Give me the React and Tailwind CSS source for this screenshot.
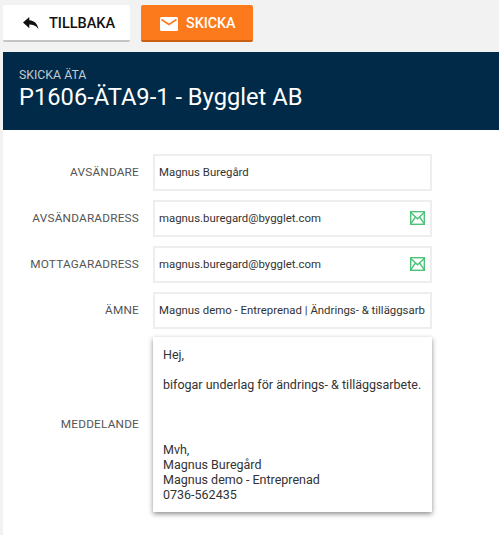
const Field = ({ label, value, icon }) => (
  <div className="flex items-center h-[37px] mb-[9px]">
    <div className="w-[136px] text-right text-[11.8px] tracking-[0.2px] text-[#555]">{label}</div>
    <div className="ml-[14px] w-[279px] h-full flex items-center justify-between bg-white border-2 border-[#eeeeee] px-[4px] text-[11.4px] text-[#333] whitespace-nowrap">
      <span>{value}</span>
      {icon && <MailOutline />}
    </div>
  </div>
);

// outlined green envelope
const MailOutline = () => (
  <svg width="15" height="14" viewBox="0 0 15 14" fill="none" stroke="#4cc27a" strokeWidth="1.4" className="mr-[1px] -mt-[2px]">
    <rect x="0.7" y="0.7" width="13.6" height="12.6" />
    <path d="M0.7 1.5 L7.5 7.8 L14.3 1.5 M0.7 12.8 L5.4 6 M14.3 12.8 L9.6 6" />
  </svg>
);

const BackArrow = () => (
  <svg width="16" height="13" viewBox="0 0 16 13" fill="#111">
    <path d="M6.3 0 L0 5.6 L6.3 11.2 V7.6 C10 7.6 13 8.6 15.4 12 C14.6 7.4 12 3.6 6.3 3.2 Z" />
  </svg>
);

const SendMail = () => (
  <svg width="18" height="14" viewBox="0 0 18 14">
    <rect width="18" height="14" rx="1.5" fill="#fff" />
    <path d="M1.5 2.5 L9 7.5 L16.5 2.5" fill="none" stroke="#fd7a1c" strokeWidth="1.6" />
  </svg>
);

export default function App() {
  return (
    <div className="w-[499px] h-[535px] overflow-hidden bg-[#f2f2f2] font-['Roboto',sans-serif]">
      {/* Buttons */}
      <div className="flex gap-[11px] pl-[3px] pt-[5px] h-[52px]">
        <button className="w-[127px] h-[37px] flex items-center pl-[20px] pt-[2px] gap-[10px] bg-white rounded-[2px] border-b-2 border-[#c4c4c4] text-[14.5px] font-medium text-[#111]">
          <BackArrow />
          TILLBAKA
        </button>
        <button className="w-[112px] h-[37px] flex items-center pl-[19px] pt-[2px] gap-[8px] bg-[#fd7a1c] rounded-[2px] border-b-2 border-[#c95f10] text-[14.3px] font-medium text-white">
          <SendMail />
          SKICKA
        </button>
      </div>

      {/* Header */}
      <div className="ml-[3px] h-[78px] bg-[#002a47] text-white pl-[16px] pt-[16px]">
        <div className="text-[12.3px] leading-[14px] text-[#c3ccd3]">SKICKA ÄTA</div>
        <div className="text-[23.7px] leading-[30px]">P1606-ÄTA9-1 - Bygglet AB</div>
      </div>

      {/* Form */}
      <div className="ml-[3px] h-[405px] bg-white pt-[24px]">
        <Field label="AVSÄNDARE" value="Magnus Buregård" />
        <Field label="AVSÄNDARADRESS" value="magnus.buregard@bygglet.com" icon />
        <Field label="MOTTAGARADRESS" value="magnus.buregard@bygglet.com" icon />
        <Field label="ÄMNE" value="Magnus demo - Entreprenad | Ändrings- & tilläggsarb" />
        <div className="flex items-center h-[175px] -mt-[1px]">
          <div className="w-[136px] text-right text-[11.8px] tracking-[0.2px] text-[#555]">MEDDELANDE</div>
          <div className="ml-[14px] w-[279px] h-full bg-white shadow-[0_2px_5px_rgba(0,0,0,0.45)] px-[10px] pt-[10px] text-[12.5px] leading-[15px] text-[#333]">
            <div>Hej,</div>
            <div className="mt-[15px]">bifogar underlag för ändrings- & tilläggsarbete.</div>
            <div className="mt-[50px]">Mvh,</div>
            <div>Magnus Buregård</div>
            <div>Magnus demo - Entreprenad</div>
            <div>0736-562435</div>
          </div>
        </div>
      </div>
    </div>
  );
}
